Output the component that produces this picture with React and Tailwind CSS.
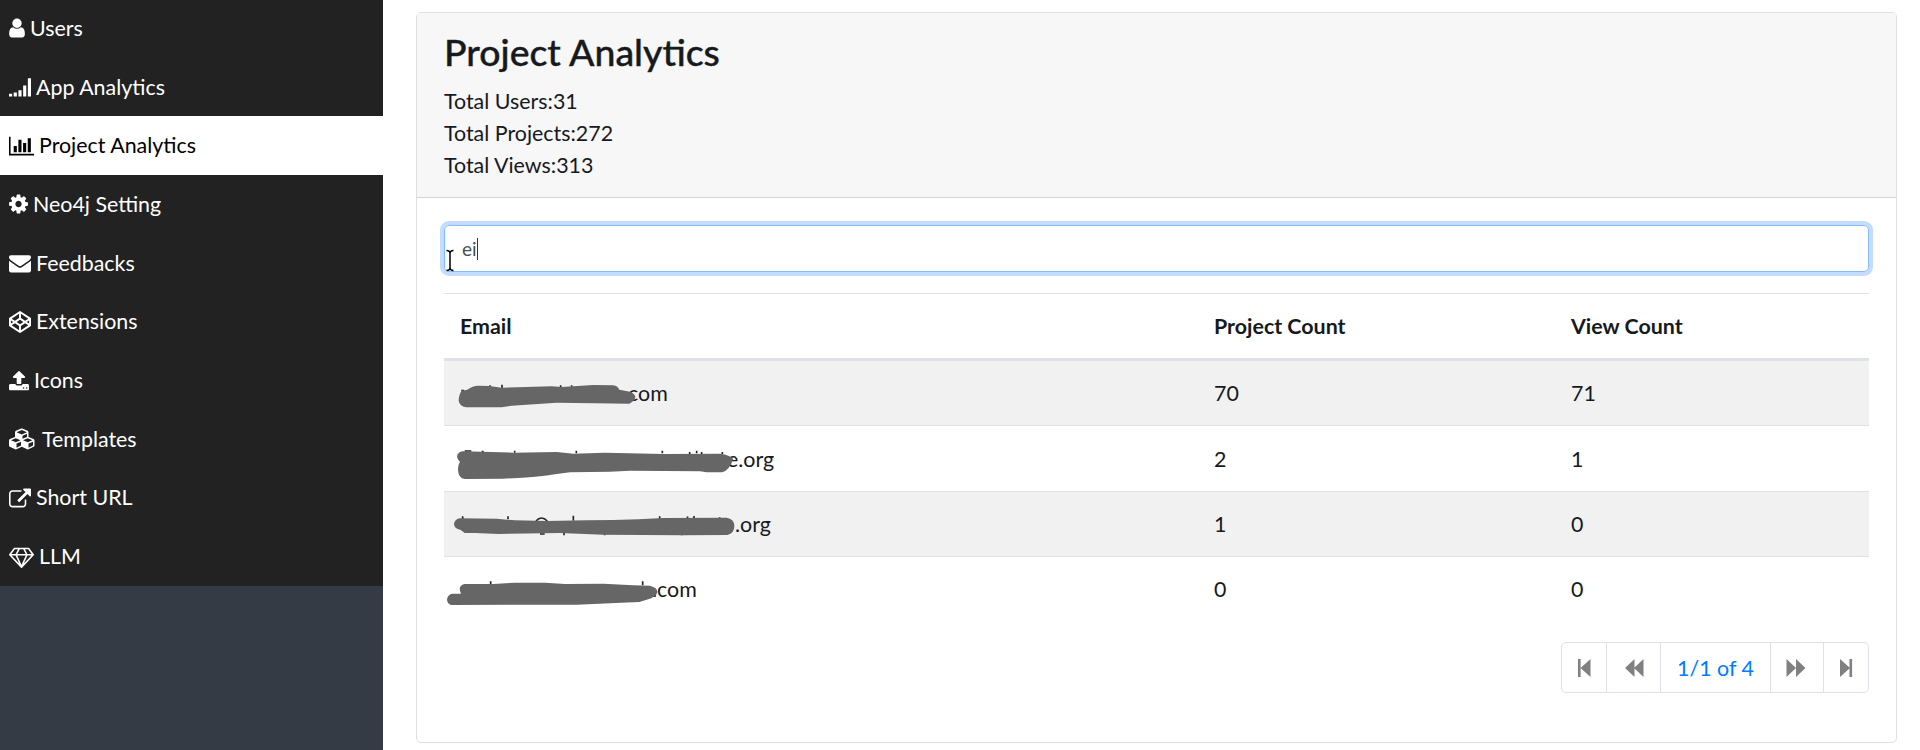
const menu = [
  {
    label: 'Users',
    box: '256 0 1280 1792',
    width: 'w-[16px] mr-[5px]',
    path: 'M1536 1399q0 109-62.5 187t-150.5 78h-854q-88 0-150.5-78t-62.5-187q0-85 8.5-160.5t31.5-152 58.5-131 94-89 134.5-34.5q131 128 313 128t313-128q76 0 134.5 34.5t94 89 58.5 131 31.5 152 8.5 160.5zm-256-887q0 159-112.5 271.5t-271.5 112.5-271.5-112.5-112.5-271.5 112.5-271.5 271.5-112.5 271.5 112.5 112.5 271.5z',
  },
  {
    label: 'App Analytics',
    box: '0 0 1792 1792',
    width: 'w-[22px] mr-[5px]',
    path: 'M0 1440h256v224h-256zM384 1344h256v320h-256zM768 1152h256v512h-256zM1152 768h256v896h-256zM1536 192h256v1472h-256z',
  },
  {
    label: 'Project Analytics',
    box: '0 0 2048 1792',
    width: 'w-[25px] mr-[5px]',
    active: true,
    path: 'M640 896v512h-256v-512h256zm384-512v1024h-256v-1024h256zm1024 1152v128h-2048v-1536h128v1408h1920zm-640-896v768h-256v-768h256zm384-384v1152h-256v-1152h256z',
  },
  {
    label: 'Neo4j Setting',
    box: '128 0 1536 1792',
    width: 'w-[19px] mr-[5px]',
    path: 'M1152 896q0-106-75-181t-181-75-181 75-75 181 75 181 181 75 181-75 75-181zm512-109v222q0 12-8 23t-20 13l-185 28q-19 54-39 91 35 50 107 138 10 12 10 25t-9 23q-27 37-99 108t-94 71q-12 0-26-9l-138-108q-44 23-91 38-16 136-29 186-7 28-36 28h-222q-14 0-24.5-8.5t-11.5-21.5l-28-184q-49-16-90-37l-141 107q-10 9-25 9-14 0-25-11-126-114-165-168-7-10-7-23 0-12 8-23 15-21 51-66.5t54-70.5q-27-50-41-99l-183-27q-13-2-21-12.5t-8-23.5v-222q0-12 8-23t19-13l186-28q14-46 39-92-40-57-107-138-10-12-10-24 0-10 9-23 26-36 98.5-107.5t94.5-71.5q13 0 26 10l138 107q44-23 91-38 16-136 29-186 7-28 36-28h222q14 0 24.5 8.5t11.5 21.5l28 184q49 16 90 37l142-107q9-9 24-9 13 0 25 10 129 119 165 170 7 8 7 22 0 12-8 23-15 21-51 66.5t-54 70.5q26 50 41 98l183 28q13 2 21 12.5t8 23.5z',
  },
  {
    label: 'Feedbacks',
    box: '0 0 1792 1792',
    width: 'w-[22px] mr-[5px]',
    path: 'M1792 710v794q0 66-47 113t-113 47h-1472q-66 0-113-47t-47-113v-794q44 49 101 87 362 246 497 345 57 42 92.5 65.5t94.5 48 110 24.5h2q51 0 110-24.5t94.5-48 92.5-65.5q170-123 498-345 57-39 100-87zm0-294q0 79-49 151t-122 123q-376 261-468 325-10 7-42.5 31t-54 38.5-52 32.5-57.5 27-50 9h-2q-23 0-50-9t-57.5-27-52-32.5-54-38.5-42.5-31q-91-64-262-182.5t-205-142.5q-62-42-117-115.5t-55-136.5q0-78 41.5-130t118.5-52h1472q65 0 112.5 47t47.5 113z',
  },
  {
    label: 'Extensions',
    box: '0 0 1792 1792',
    width: 'w-[22px] mr-[5px]',
    path: 'M216 1169l603 402v-359l-334-223zm-62-144l193-129-193-129v258zm819 546l603-402-269-180-334 223v359zm-77-493l272-182-272-182-272 182zm-411-275l334-223v-359l-603 402zm960 93l193 129v-258zm-138-93l269-180-603-402v359zm485-180v546q0 41-34 64l-819 546q-21 13-43 13t-43-13l-819-546q-34-23-34-64v-546q0-41 34-64l819-546q21-13 43-13t43 13l819 546q34 23 34 64z',
  },
  {
    label: 'Icons',
    box: '64 0 1664 1792',
    width: 'w-[20px] mr-[5px]',
    path: 'M1344 1472q0-26-19-45t-45-19-45 19-19 45 19 45 45 19 45-19 19-45zm256 0q0-26-19-45t-45-19-45 19-19 45 19 45 45 19 45-19 19-45zm128-224v320q0 40-28 68t-68 28h-1472q-40 0-68-28t-28-68v-320q0-40 28-68t68-28h427q21 56 70.5 92t110.5 36h256q61 0 110.5-36t70.5-92h427q40 0 68 28t28 68zm-325-648q-17 40-59 40h-256v448q0 26-19 45t-45 19h-256q-26 0-45-19t-19-45v-448h-256q-42 0-59-40-17-39 14-69l448-448q18-19 45-19t45 19l448 448q31 30 14 69z',
  },
  {
    label: 'Templates',
    box: '0 0 2304 1792',
    width: 'w-[27px] mr-[6px]',
    path: 'M640 1632l384-192v-314l-384 164v342zm-64-454l404-173-404-173-404 173zm1088 454l384-192v-314l-384 164v342zm-64-454l404-173-404-173-404 173zm-448-293l384-165v-266l-384 164v267zm-64-379l441-189-441-189-441 189zm1088 518v416q0 36-19 67t-52 47l-448 224q-25 14-57 14t-57-14l-448-224q-4-2-7-4-2 2-7 4l-448 224q-25 14-57 14t-57-14l-448-224q-33-16-52-47t-19-67v-416q0-38 21.5-70t56.5-48l434-186v-400q0-38 21.5-70t56.5-48l448-192q23-10 50-10t50 10l448 192q35 16 56.5 48t21.5 70v400l434 186q36 16 57 48t21 70z',
  },
  {
    label: 'Short URL',
    box: '0 -128 1792 1792',
    width: 'w-[22px] mr-[5px]',
    path: 'M1408 928v320q0 119-84.5 203.5t-203.5 84.5h-832q-119 0-203.5-84.5t-84.5-203.5v-832q0-119 84.5-203.5t203.5-84.5h704q14 0 23 9t9 23v64q0 14-9 23t-23 9h-704q-66 0-113 47t-47 113v832q0 66 47 113t113 47h832q66 0 113-47t47-113v-320q0-14 9-23t23-9h64q14 0 23 9t9 23zm384-864v512q0 26-19 45t-45 19-45-19l-176-176-652 652q-10 10-23 10t-23-10l-114-114q-10-10-10-23t10-23l652-652-176-176q-19-19-19-45t19-45 45-19h512q26 0 45 19t19 45z',
  },
  {
    label: 'LLM',
    box: '0 0 2048 1792',
    width: 'w-[25px] mr-[5px]',
    path: 'M212 768l623 665-300-665h-323zm812 772l349-772h-698zm-486-900l204-384h-262l-288 384h346zm675 793l623-665h-323zm-531-793h684l-204-384h-276zm828 0h346l-288-384h-262zm141-486l384 512q14 18 13 41.5t-17 40.5l-960 1024q-18 20-47 20t-47-20l-960-1024q-16-17-17-40.5t13-41.5l384-512q18-26 51-26h1152q33 0 51 26z',
  },
]

// scribbles are drawn in thirds of a pixel, starting at the row's top left corner
const rows = [
  {
    email: '.com',
    pad: 'pl-[179px]',
    height: 'h-[64px]',
    bg: 'bg-[#f1f1f1]',
    projects: 70,
    views: 71,
    box: '42 213 1200 192',
    ticks: 'M94 302h8M180 286v6M216 284v10M392 286v6M425 286v6',
    blob: 'M95 302L112 299Q130 286 146 287L178 288L215 293L365 289L395 291L490 285L550 286Q562 287 568 299L600 305Q616 312 616 322Q614 334 598 341L495 340L380 338L245 347L215 352L108 352Q88 348 86 332Q87 312 95 302Z',
  },
  {
    email: 'e.org',
    pad: 'pl-[283px]',
    height: 'h-[66px]',
    bg: 'border-t border-[#dee2e6]',
    projects: 2,
    views: 1,
    box: '42 -42 1200 198',
    ticks: 'M104 33h20M155 35h6M254 32v6M439 32v8M697 32v8M779 36v6M800 32v8M815 36v6M877 36v6',
    blob: 'M98 34L250 38L380 36L430 41L525 38L700 42L870 41Q900 45 910 57Q898 92 876 97L830 97L810 94L600 92L540 95L420 97L380 102Q320 112 218 116L105 117Q84 116 84 88Q85 72 90 66Q81 58 81 49Q84 36 98 34Z',
  },
  {
    email: '.org',
    pad: 'pl-[291px]',
    height: 'h-[65px]',
    bg: 'bg-[#f1f1f1] border-t border-[#dee2e6]',
    projects: 1,
    views: 0,
    box: '42 156 1200 195',
    ticks: 'M98 229v9M234 229v9M318 243q16-18 34 0M430 227v15M689 229v8M792 228v8M770 232h5M869 232v5M402 279v7M524 280v6M755 280v6M330 282h14',
    blob: 'M90 235L200 236L255 241L350 243L470 241L550 240L625 238L700 234L890 233Q912 236 913 257Q914 280 892 285L755 286L520 284L390 279L205 282L135 279L104 279L91 269Q72 266 72 251Q75 237 90 235Z',
  },
  {
    email: '.com',
    pad: 'pl-[208px]',
    height: 'h-[65px]',
    bg: 'border-t border-[#dee2e6]',
    projects: 0,
    views: 0,
    box: '42 351 1200 195',
    ticks: 'M182 424v8M638 424v12',
    blob: 'M104 432L190 432L255 428L345 428L405 432L520 431L610 436L660 437Q682 443 682 455Q682 470 650 479L628 486L540 490L440 494L64 495Q51 492 51 478Q53 463 68 461L93 461Q89 452 89 445Q93 433 104 432Z',
  },
]

const pager = [
  { width: 'w-[44px]', path: 'M16 18h2.6v18h-2.6zM28.5 18v18l-10-9z' },
  { width: 'w-[54px]', path: 'M27.5 18v18l-9.5-9zM36.5 18v18l-9.5-9z' },
  { width: 'w-[110px]', text: '1/1 of 4' },
  { width: 'w-[53px]', path: 'M15.5 18v18l9.5-9zM25 18v18l9.5-9z' },
  { width: 'w-[45px]', path: 'M16 18v18l10-9zM25.5 18h2.6v18h-2.6z' },
]

function Sidebar() {
  return (
    <aside className="w-[383px] shrink-0 bg-[#353b44]">
      <nav className="-mt-px flex h-[587px] flex-col bg-[#222]">
        {menu.map((item) => (
          <a
            key={item.label}
            className={`flex flex-1 items-center pl-[9px] ${item.active ? 'bg-white text-black' : 'text-white'}`}
          >
            <svg viewBox={item.box} className={`h-[22px] shrink-0 fill-current ${item.width}`}>
              <path d={item.path} />
            </svg>
            <span className="-mt-px">{item.label}</span>
          </a>
        ))}
      </nav>
    </aside>
  )
}

function ProjectTable() {
  return (
    <table className="mt-[21px] w-full table-fixed border-separate border-spacing-0 text-left">
      <thead>
        <tr className="h-[68px]">
          <th className="w-[754px] border-t border-b-3 border-[#dee2e6] pl-[16px]">Email</th>
          <th className="w-[357px] border-t border-b-3 border-[#dee2e6] pl-[16px]">Project Count</th>
          <th className="border-t border-b-3 border-[#dee2e6] pl-[16px]">View Count</th>
        </tr>
      </thead>
      <tbody>
        {rows.map((row, i) => (
          <tr key={i} className={row.height}>
            <td className={`relative p-0 ${row.pad} ${row.bg}`}>
              {row.email}
              <svg viewBox={row.box} className="absolute top-0 left-0 w-[400px] overflow-visible">
                <path d={row.ticks} fill="none" stroke="#212529" strokeWidth="5" />
                <path d={row.blob} fill="#666" />
              </svg>
            </td>
            <td className={`p-0 pl-[16px] ${row.bg}`}>{row.projects}</td>
            <td className={`p-0 pl-[16px] ${row.bg}`}>{row.views}</td>
          </tr>
        ))}
      </tbody>
    </table>
  )
}

function Pager() {
  return (
    <div className="mt-[21px] ml-auto flex h-[51px] w-[308px] rounded-[5px] border border-[#dee2e6]">
      {pager.map((p, i) => (
        <button
          key={i}
          className={`flex shrink-0 items-center justify-center border-[#dee2e6] ${p.width} ${i > 0 ? 'border-l' : ''}`}
        >
          {p.text ? (
            <span className="text-[#007bff]">{p.text}</span>
          ) : (
            <svg className="h-full w-full fill-[#808080]">
              <path d={p.path} transform="translate(0 -2)" />
            </svg>
          )}
        </button>
      ))}
    </div>
  )
}

export default function App() {
  return (
    <div className="flex h-[750px] w-full overflow-hidden bg-white font-['Lato','Carlito',sans-serif] text-[21.4px] leading-[32px] text-[#16191d]">
      <Sidebar />
      <main className="flex-1 pt-[12px] pr-[23px] pl-[33px]">
        <section className="h-[731px] rounded-[5px] border border-[#dfdfdf]">
          <header className="h-[185px] border-b border-[#d5d5d5] bg-[#f7f7f7] px-[27px] pt-[16px]">
            <h3 className="mb-[11px] text-[37.4px] leading-[45px] font-medium [-webkit-text-stroke:0.4px_#212529]">
              Project Analytics
            </h3>
            <div>Total Users:31</div>
            <div>Total Projects:272</div>
            <div>Total Views:313</div>
          </header>
          <div className="px-[27px] pt-[27px]">
            <div className="relative flex h-[47px] items-center rounded-[5px] border border-[#80bdff] pl-[17px] text-[19px] text-[#495057] ring-4 ring-[#c4dcff]">
              ei
              <span className="h-[22px] w-px bg-[#333]" />
              {/* mouse pointer */}
              <svg viewBox="0 0 10 23" className="absolute top-[23px] left-0 h-[23px] w-[10px]">
                <path d="M1.5 1.5Q5 1.5 5 4.5Q5 1.5 8.5 1.5M5 4v15M1.5 21.5Q5 21.5 5 18.5Q5 21.5 8.5 21.5" fill="none" stroke="#000" strokeWidth="1.5" />
              </svg>
            </div>
            <ProjectTable />
            <Pager />
          </div>
        </section>
      </main>
    </div>
  )
}
